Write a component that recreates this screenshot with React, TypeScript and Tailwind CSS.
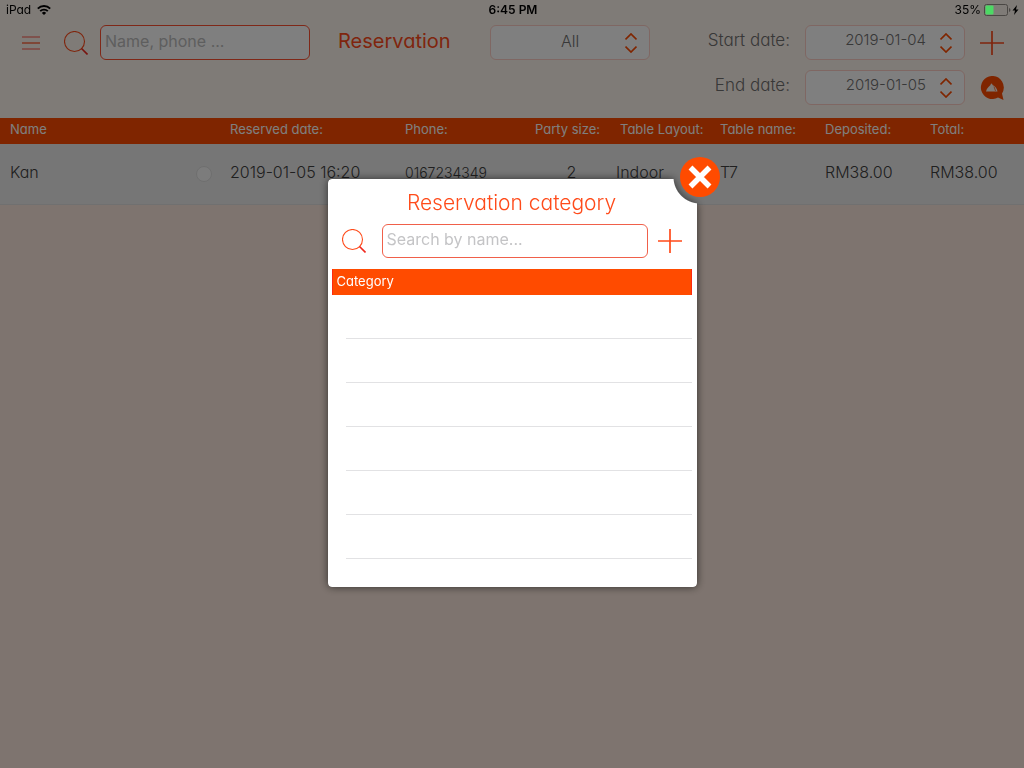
import { useState } from "react";
import type { ReactNode } from "react";

type Reservation = {
  name: string;
  date: string;
  phone: string;
  size: number;
  layout: string;
  table: string;
  deposited: string;
  total: string;
};

const reservations: Reservation[] = [
  {
    name: "Kan",
    date: "2019-01-05 16:20",
    phone: "0167234349",
    size: 2,
    layout: "Indoor",
    table: "T7",
    deposited: "RM38.00",
    total: "RM38.00",
  },
];

const columns = [
  { label: "Name", width: "w-[220px]" },
  { label: "Reserved date:", width: "w-[175px]" },
  { label: "Phone:", width: "w-[130px]" },
  { label: "Party size:", width: "w-[85px]" },
  { label: "Table Layout:", width: "w-[100px]" },
  { label: "Table name:", width: "w-[105px]" },
  { label: "Deposited:", width: "w-[105px]" },
  { label: "Total:", width: "" },
];

function SearchIcon() {
  return (
    <svg viewBox="0 0 24 24" className="size-6" fill="none" stroke="currentColor">
      <circle cx="10.5" cy="10.5" r="10" strokeWidth="1.1" />
      <path d="M17.5 17.5 23.5 23.5" stroke="#f0281e" strokeWidth="1.6" />
    </svg>
  );
}

function PlusIcon() {
  return (
    <svg viewBox="0 0 24 24" className="size-6" fill="none" stroke="currentColor" strokeWidth="1.7">
      <path d="M12 0v24M0 12h24" />
    </svg>
  );
}

function StatusBar() {
  return (
    <div className="relative z-20 grid h-5 grid-cols-3 items-center pr-1 pl-1.5 text-xs text-black">
      <div className="flex items-center gap-1.5">
        <span>iPad</span>
        <svg viewBox="0 0 14 10" className="h-2.5 w-3.5" fill="none" stroke="currentColor" strokeWidth="1.9">
          <path d="M.8 3.6a8.8 8.8 0 0 1 12.4 0" />
          <path d="M3.2 6.2a5.4 5.4 0 0 1 7.6 0" />
          <path d="M7 10 4.9 7.9a3 3 0 0 1 4.2 0Z" fill="currentColor" stroke="none" />
        </svg>
      </div>
      <span className="text-center font-semibold">6:45 PM</span>
      <div className="flex items-center justify-end gap-[3px]">
        <span>35%</span>
        <svg viewBox="0 0 36 12" className="h-3 w-9">
          <rect x=".5" y=".5" width="23" height="11" rx="2" fill="none" stroke="#4a4744" />
          <rect x="1.5" y="1.5" width="8" height="9" rx="1" fill="#4cd964" />
          <path d="M25 4v4q1.500-.5 1.500-2T25 4Z" fill="#4a4744" />
          <path d="m33 1-4.500 5.500H31L30 11l4.500-5.500H32Z" fill="#000" />
        </svg>
      </div>
    </div>
  );
}

function PickerBox({ id, label, value, className }: { id: string; label: string; value: string; className: string }) {
  return (
    <div className="relative w-40">
      <select
        id={id}
        aria-label={label}
        className={`h-[35px] w-full appearance-none rounded-md border border-[#ffcfc6] bg-white pb-1 font-light text-[#707070] ${className}`}
      >
        <option>{value}</option>
      </select>
      <svg
        viewBox="0 0 12 20"
        className="pointer-events-none absolute top-2 right-[13px] h-5 w-3"
        fill="none"
        stroke="#ff4b00"
        strokeWidth="1.7"
      >
        <path d="M.5 6.500 6 1l5.500 5.500M.5 13.500 6 19l5.500-5.500" />
      </svg>
    </div>
  );
}

function IconButton({ label, children, onClick }: { label: string; children: ReactNode; onClick?: () => void }) {
  return (
    <button type="button" aria-label={label} onClick={onClick} className="shrink-0 text-[#ff4b1a]">
      {children}
    </button>
  );
}

function Toolbar() {
  return (
    <header className="flex h-[98px] items-start pt-[5px] pr-5 pl-[22px]">
      <div className="flex h-[35px] items-center">
        <IconButton label="Menu">
          <svg viewBox="0 0 18 14" className="h-3.5 w-[18px]" fill="none" stroke="currentColor">
            <path d="M0 1h18M0 13h18" stroke="#ff8a80" strokeWidth="1.400" />
            <path d="M0 7h18" strokeWidth="1.200" />
          </svg>
        </IconButton>
        <div className="ml-6 flex items-center gap-3">
          <IconButton label="Search">
            <SearchIcon />
          </IconButton>
          <input
            type="text"
            aria-label="Name or phone"
            placeholder="Name, phone ..."
            className="h-[35px] w-[210px] rounded-md border border-[#ff5030] bg-white px-1 pb-1 text-base [font-feature-settings:normal] placeholder:text-[#bcbcbc]"
          />
        </div>
        <h1 className="ml-7 w-[152px] pb-1 text-xl text-[#ff4b1a]">Reservation</h1>
        <PickerBox id="status" label="Status" value="All" className="text-center text-base" />
      </div>
      <div className="ml-auto grid grid-cols-[auto_160px_24px] items-center gap-x-[15px] gap-y-2.5 text-right text-[17px] font-light text-[#707070]">
        <label htmlFor="start" className="pb-1">
          Start date:
        </label>
        <PickerBox id="start" label="Start date" value="2019-01-04" className="pr-[38px] text-right text-[15px]" />
        <IconButton label="Add reservation">
          <PlusIcon />
        </IconButton>
        <label htmlFor="end" className="pb-1">
          End date:
        </label>
        <PickerBox id="end" label="End date" value="2019-01-05" className="pr-[38px] text-right text-[15px]" />
        <IconButton label="Messages">
          <svg viewBox="0 0 24 24" className="size-6">
            <path d="M11.500 0a11.500 11.500 0 1 0 6.500 21.500l5.500 2.500-1.500-6.500A11.500 11.500 0 0 0 11.500 0Z" fill="#ff4b00" />
            <path d="M6 15.500q.5-3 2.500-4.500l2-2q0-1.500 1-1.500t1 1.500q4 1.500 5 6.500Z" fill="#fff6ee" />
            <path d="m14 10.500 1.500 4.500" stroke="#ff4b00" strokeWidth=".7" />
          </svg>
        </IconButton>
      </div>
    </header>
  );
}

function ReservationTable() {
  return (
    <table className="w-full table-fixed text-left whitespace-nowrap">
      <thead>
        <tr className="h-[26px] bg-[#ff4b00] text-[13px] text-white">
          {columns.map((column) => (
            <th key={column.label} className={`pb-0.5 pl-2.5 font-normal ${column.width}`}>
              {column.label}
            </th>
          ))}
        </tr>
      </thead>
      <tbody>
        {reservations.map((r) => (
          <tr key={r.phone} className="h-[60px] border-b border-[#e0e0e0] bg-[#ededed] text-base font-light text-[#404040]">
            <td className="pl-2.5">
              <div className="flex items-center justify-between pr-2">
                <span className="pb-1">{r.name}</span>
                <input
                  type="radio"
                  aria-label={`Select ${r.name}`}
                  className="size-4 appearance-none rounded-full border border-[#dedede] bg-[#f8f8f8]"
                />
              </div>
            </td>
            <td className="pb-1 pl-2.5">{r.date}</td>
            <td className="pb-0.5 pl-2.5 text-sm">{r.phone}</td>
            <td className="pb-1 pl-2 text-center">{r.size}</td>
            <td className="pb-1 pl-1.5">{r.layout}</td>
            <td className="pb-1 pl-2.5">{r.table}</td>
            <td className="pb-1 pl-2.5">{r.deposited}</td>
            <td className="pb-1 pl-2.5">{r.total}</td>
          </tr>
        ))}
      </tbody>
    </table>
  );
}

function CategoryDialog({ onClose }: { onClose: () => void }) {
  return (
    <div className="fixed inset-0 z-10 flex items-center justify-center bg-black/50">
      <div role="dialog" aria-label="Reservation category" className="relative -mt-0.5">
        <div className="drop-shadow-[0_0_4px_rgba(0,0,0,0.6)]">
          <div className="h-[408px] w-[369px] rounded bg-white pt-2.5 pr-[5px] pl-1 [mask-image:radial-gradient(circle_at_calc(100%+3px)_-2px,transparent_26px,black_27px)]">
            <h2 className="text-center text-[21px] leading-7 font-light text-[#ff4b1a]">Reservation category</h2>
            <div className="mt-[7px] flex items-center gap-2.5 px-2.5">
              <IconButton label="Search">
                <SearchIcon />
              </IconButton>
              <input
                type="text"
                aria-label="Search by name"
                placeholder="Search by name..."
                className="ml-1.5 h-[34px] min-w-0 flex-1 rounded-md border border-[#f0604a] px-1 pb-1 text-base [font-feature-settings:normal] placeholder:text-[#c4c4c6]"
              />
              <IconButton label="Add category">
                <PlusIcon />
              </IconButton>
            </div>
            <div className="mt-[11px] h-[26px] border-x border-[#ff2a10] bg-[#ff4b00] pl-1 text-[13px] leading-6 text-white">
              Category
            </div>
            <ul className="pl-3.5">
              {Array.from({ length: 6 }).map((_, i) => (
                <li key={i} className="h-11 border-b border-[#e2e2e4]" />
              ))}
            </ul>
          </div>
        </div>
        <button
          type="button"
          aria-label="Close"
          onClick={onClose}
          className="absolute -top-[22px] -right-[23px] flex size-10 items-center justify-center rounded-full bg-[#ff4b00]"
        >
          <svg viewBox="0 0 24 24" className="size-6" fill="none" stroke="#fff" strokeWidth="5.500">
            <path d="m2.500 2.500 19 19M21.500 2.500l-19 19" />
          </svg>
        </button>
      </div>
    </div>
  );
}

export default function App() {
  const [open, setOpen] = useState(true);

  return (
    <div className="min-h-screen bg-[#fde9de] font-['Inter',sans-serif] [font-feature-settings:'cv11']">
      <div className="bg-[#fff6ee]">
        <StatusBar />
        <Toolbar />
      </div>
      <ReservationTable />
      {open && <CategoryDialog onClose={() => setOpen(false)} />}
    </div>
  );
}
